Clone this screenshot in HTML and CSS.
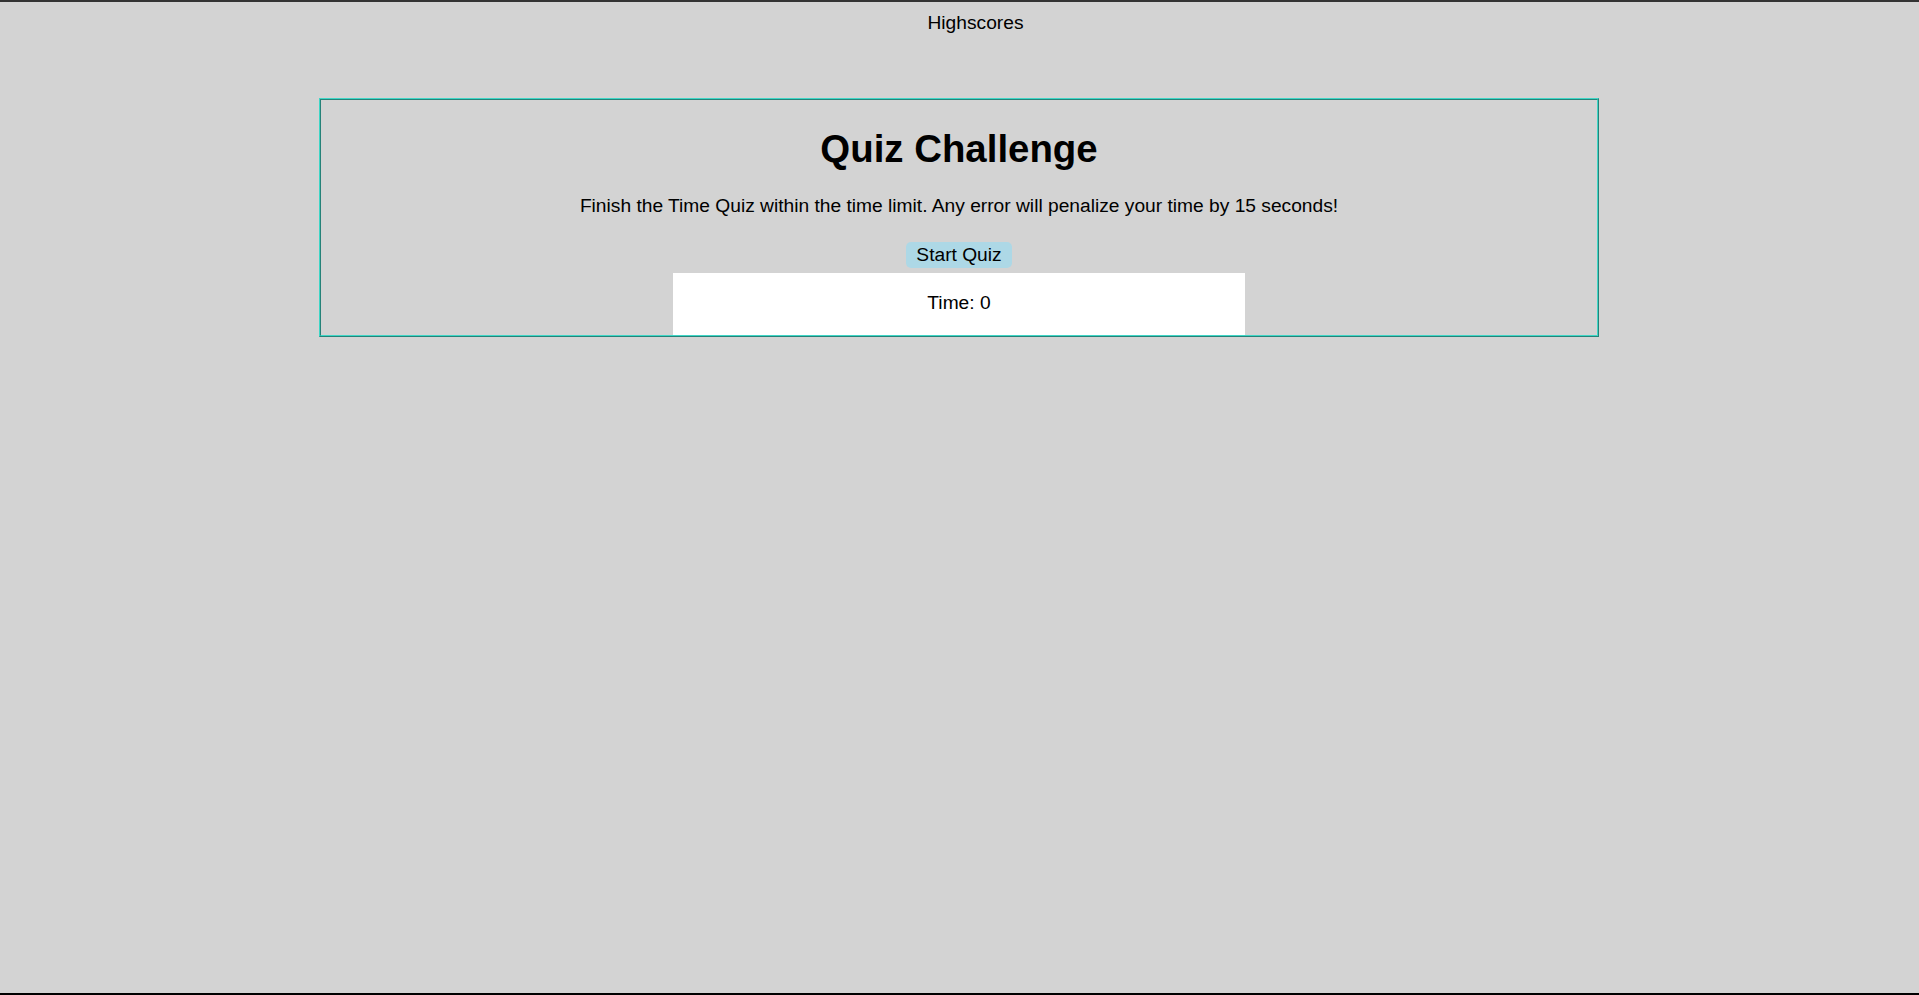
FILE: index.html
```html
<!DOCTYPE html>
<html lang="en">
<head>
<meta charset="utf-8">
<title>Quiz Challenge</title>
<link rel="stylesheet" href="styles.css">
</head>
<body>
<header class="topbar">
  <a class="highscores">Highscores</a>
</header>
<main class="quiz">
  <h1 class="quiz-title">Quiz Challenge</h1>
  <p class="quiz-intro">Finish the Time Quiz within the time limit. Any error will penalize your time by 15 seconds!</p>
  <div class="actions">
    <button class="start-btn" type="button">Start Quiz</button>
  </div>
  <div class="timer">Time: 0</div>
</main>
</body>
</html>
```
FILE: styles.css
```css
html {
  background: #d3d3d3;
}

body {
  margin: 0;
  min-height: 100vh;
  box-sizing: border-box;
  border-top: 2px solid #333333;
  border-bottom: 2px solid #000000;
  background: #d3d3d3;
  color: #000;
  font-family: "Liberation Sans", Arial, sans-serif;
  font-size: 19.2px;
  padding-top: 10px;
}

.topbar {
  text-align: center;
  padding-left: 32px;
  line-height: 22px;
}

.highscores {
  color: #000;
}

.quiz {
  width: 1276px;
  margin: 64px 0 0 319px;
  border: 2px ridge #3fd6c6;
  display: flex;
  flex-direction: column;
  align-items: center;
  text-align: center;
}

.quiz-title {
  font-size: 38.4px;
  line-height: 44px;
  margin: 27px 0 0;
}

.quiz-intro {
  margin: 24px 0 0;
  line-height: 22px;
}

.actions {
  margin-top: 25px;
}

.start-btn {
  font-family: inherit;
  font-size: 19.2px;
  line-height: 22px;
  color: #000;
  background: #add8e6;
  border: none;
  border-radius: 5px;
  padding: 2px 10px;
}

.timer {
  width: 572px;
  margin-top: 5px;
  background: #fff;
  line-height: 22px;
  padding: 19px 0 21px;
}
```
